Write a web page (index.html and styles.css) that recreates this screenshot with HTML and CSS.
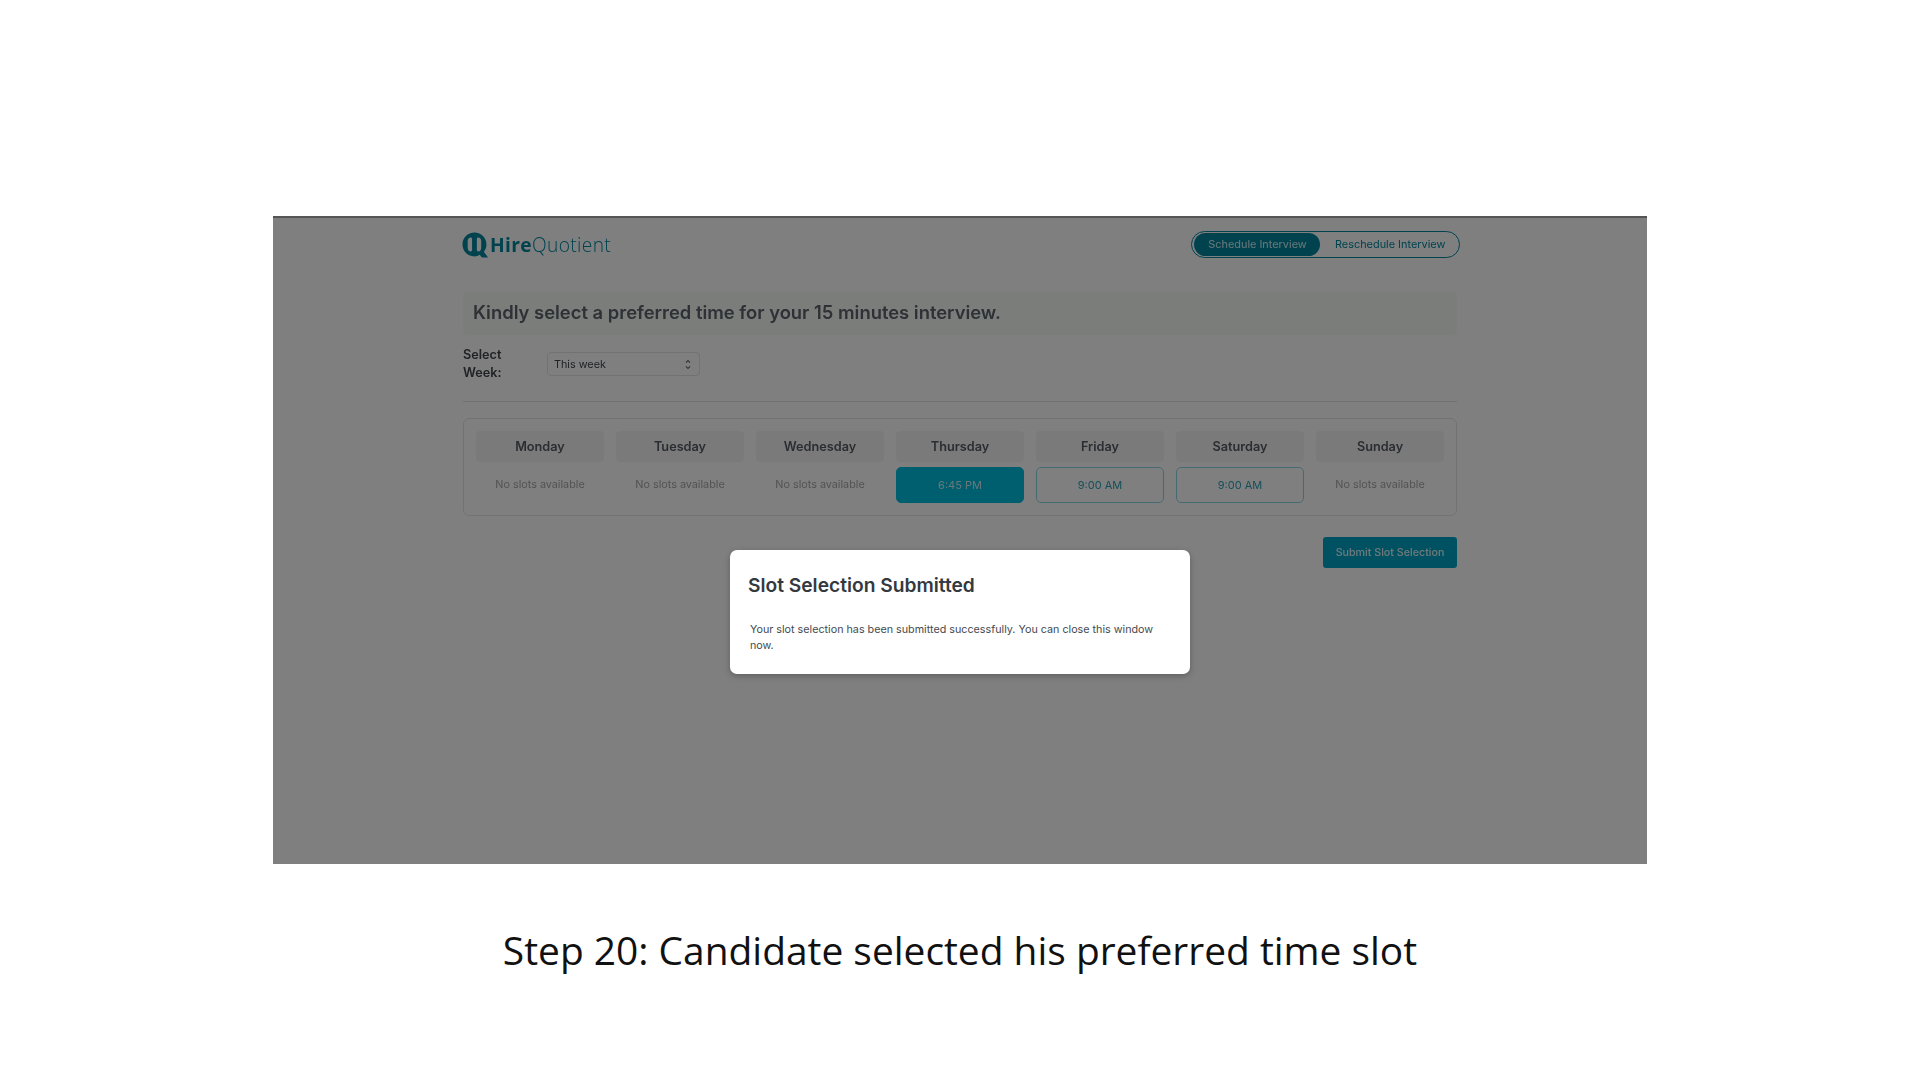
FILE: index.html
```html
<!DOCTYPE html>
<html lang="en">
<head>
<meta charset="utf-8">
<title>Step 20</title>
<link rel="stylesheet" href="styles.css">
</head>
<body>
<main class="slide">
  <section class="frame">
    <div class="app">
      <header class="topbar">
        <div class="logo">
          <svg class="logo-mark" viewBox="0 0 25 25" width="27" height="26" aria-hidden="true">
            <path fill="#00869f" fill-rule="evenodd" d="M11.5 0.5C17.9 0.5 23 5.7 23 12C23 14.7 22.1 17.1 20.5 19.1L24.6 24.4H18.6L16.6 21.9C15 22.9 13.3 23.5 11.5 23.5C5.1 23.5 0 18.3 0 12C0 5.7 5.1 0.5 11.5 0.5ZM7.8 5.2C6.2 5.2 5 6.8 5 8.6V15.4C5 17.2 6.2 18.8 7.8 18.8C8.7 18.8 9.2 18.2 9.2 17.4V6.6C9.2 5.8 8.7 5.2 7.8 5.2ZM15.2 5.2C14.3 5.2 13.8 5.8 13.8 6.6V17.4C13.8 18.2 14.3 18.8 15.2 18.8C16.8 18.8 18 17.2 18 15.4V8.6C18 6.8 16.8 5.2 15.2 5.2Z"/>
          </svg>
          <span class="logo-text"><b>Hire</b>Quotient</span>
        </div>
        <div class="toggle">
          <span class="toggle-item active">Schedule Interview</span>
          <span class="toggle-item">Reschedule Interview</span>
        </div>
      </header>

      <h1 class="prompt">Kindly select a preferred time for your 15 minutes interview.</h1>

      <div class="week-row">
        <label class="week-label">Select<br>Week:</label>
        <div class="select">
          <span>This week</span>
          <svg viewBox="0 0 8 14" width="6" height="11" aria-hidden="true">
            <path d="M1.2 4.6L4 1.8L6.8 4.6M1.2 9.4L4 12.2L6.8 9.4" fill="none" stroke="#666" stroke-width="1.4"/>
          </svg>
        </div>
      </div>

      <hr class="divider">

      <div class="calendar">
        <div class="day"><div class="day-name">Monday</div><div class="none">No slots available</div></div>
        <div class="day"><div class="day-name">Tuesday</div><div class="none">No slots available</div></div>
        <div class="day"><div class="day-name">Wednesday</div><div class="none">No slots available</div></div>
        <div class="day"><div class="day-name">Thursday</div><div class="slot picked">6:45 PM</div></div>
        <div class="day"><div class="day-name">Friday</div><div class="slot">9:00 AM</div></div>
        <div class="day"><div class="day-name">Saturday</div><div class="slot">9:00 AM</div></div>
        <div class="day"><div class="day-name">Sunday</div><div class="none">No slots available</div></div>
      </div>

      <div class="actions"><span class="submit">Submit Slot Selection</span></div>
    </div>

    <div class="overlay"></div>

    <div class="modal">
      <h2 class="modal-title">Slot Selection Submitted</h2>
      <p class="modal-body">Your slot selection has been submitted successfully. You can close this window now.</p>
    </div>
  </section>

  <p class="caption">Step 20: Candidate selected his preferred time slot</p>
</main>
</body>
</html>
```
FILE: styles.css
```css
* { box-sizing: border-box; }
html, body { margin: 0; padding: 0; background: #fff; }
body { width: 1920px; height: 1080px; overflow: hidden; font-family: Inter, "Liberation Sans", sans-serif; }

.slide { display: flex; flex-direction: column; align-items: center; padding-top: 216px; }

.frame {
  position: relative;
  width: 1374px;
  height: 648px;
  background: #fff;
  border-top: 2px solid #555;
  overflow: hidden;
}

.app { width: 994px; margin-left: 190px; padding-top: 13px; filter: blur(0.35px); }

.topbar { display: flex; justify-content: space-between; align-items: center; height: 27px; margin-right: -3px; margin-left: -1px; }
.logo { display: flex; align-items: center; gap: 1px; }
.logo-mark { display: block; }
.logo-text { font-family: "Open Sans", sans-serif; font-size: 19.2px; line-height: 24px; color: #00869f; letter-spacing: 0.35px; font-weight: 300; }
.logo-text b { font-weight: 700; }

.toggle { display: flex; align-items: center; width: 269px; height: 27.5px; padding: 0 2px; border: 1px solid #00869f; border-radius: 14px; }
.toggle-item { flex: none; font-size: 10.9px; color: #00869f; padding: 0 15px; line-height: 23px; white-space: nowrap; }
.toggle-item.active { width: 126px; padding: 0 0 0 1px; text-align: center; background: #00869f; color: #cfeef3; border-radius: 12px; }

.prompt {
  margin: 34px 0 0;
  height: 43px;
  padding: 0 10px;
  background: #f6fbf7;
  border-radius: 5px;
  font-size: 18.4px;
  font-weight: 600;
  line-height: 41px;
  color: #5c646c;
}

.week-row { display: flex; align-items: center; margin-top: 10px; height: 38px; }
.week-label { width: 84px; font-size: 12.7px; font-weight: 600; line-height: 18px; color: #40454b; }
.select { display: flex; align-items: center; justify-content: space-between; width: 153px; height: 24px; padding: 0 8px 0 6px; background: #fff; border: 1px solid #e4e4e4; border-radius: 4px; font-size: 10.8px; color: #40454b; }

.divider { margin: 18px 0 0; border: 0; border-top: 1px solid #e2e2e2; }

.calendar { display: grid; grid-template-columns: repeat(7, 128px); column-gap: 12px; margin-top: 16px; height: 98px; padding: 12px; border: 1px solid #e2e4e4; border-radius: 6px; }
.day { display: flex; flex-direction: column; gap: 5px; }
.day-name { height: 31px; background: #f5f5f5; border-radius: 4px; font-size: 12.7px; font-weight: 600; line-height: 31px; text-align: center; color: #555b62; }
.none { height: 36px; font-size: 10.8px; line-height: 36px; text-align: center; color: #a6a6a6; }
.slot { height: 36px; border: 1px solid #8ad6e4; border-radius: 5px; font-size: 11px; line-height: 34px; text-align: center; color: #2c9fb6; }
.slot.picked { background: #00bedc; border-color: #00bedc; color: #cdeff5; }

.actions { display: flex; justify-content: flex-end; margin-top: 21px; }
.submit { width: 134px; height: 31px; background: #00a5c4; border-radius: 3px; font-size: 10.7px; font-weight: 500; line-height: 31px; text-align: center; color: #dff2f6; }

.overlay { position: absolute; inset: 0; background: rgba(0, 0, 0, 0.5); }

.modal {
  position: absolute;
  left: 457px;
  top: 332px;
  width: 460px;
  height: 124px;
  padding: 0 18px;
  background: #fff;
  border-radius: 7px;
  box-shadow: 0 2px 6px rgba(0, 0, 0, 0.25);
}
.modal-title { margin: 24px 0 0; font-size: 19.2px; font-weight: 600; line-height: 22px; color: #343940; }
.modal-body { margin: 26px 0 0 2px; font-size: 10.75px; line-height: 16px; color: #444a50; }

.caption { margin: 60px 0 0; font-family: "Open Sans", sans-serif; font-size: 38.9px; line-height: 52px; color: #111; }
```
